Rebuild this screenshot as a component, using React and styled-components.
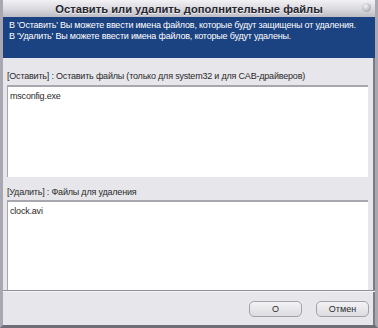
import React from 'react';
import styled, { createGlobalStyle } from 'styled-components';

const GlobalStyle = createGlobalStyle`
    html, body {
        margin: 0;
        padding: 0;
        background: #fff;
    }
    body {
        font-family: "Liberation Sans", Arial, sans-serif;
    }
`;

const Window = styled.div`
    width: 378px;
    height: 328px;
    box-sizing: border-box;
    display: flex;
    flex-direction: column;
    background: #e7e6eb;
    border-left: 3px solid #a9a8b2;
    border-right: 3px solid #a9a8b2;
    border-bottom: 3px solid #6e6d78;
    box-shadow: inset -2px 0 0 #7c7b86;
    overflow: hidden;
`;

const TitleBar = styled.div`
    height: 17px;
    flex: none;
    position: relative;
    display: flex;
    align-items: center;
    justify-content: center;
    background: linear-gradient(#f2f2f5 0%, #d8d8de 55%, #bdbcc5 100%);
    font-size: 11.2px;
    font-weight: bold;
    color: #26262e;
    text-shadow: 0 1px 0 rgba(255, 255, 255, .7);
`;

const CloseDot = styled.span`
    position: absolute;
    right: 4px;
    top: 3px;
    width: 9px;
    height: 9px;
    border-radius: 50%;
    background: radial-gradient(circle at 40% 35%, #f4f4f6 0%, #b9b9c1 60%, #8d8c96 100%);
`;

const InfoPanel = styled.div`
    height: 41px;
    flex: none;
    box-sizing: border-box;
    padding: 3px 6px 0;
    background: #1b4281;
    color: #fff;
    font-size: 9px;
    line-height: 11px;
    letter-spacing: -0.2px;
    white-space: nowrap;
`;

const Body = styled.div`
    flex: 1;
    display: flex;
    flex-direction: column;
    padding: 11px 7px 0 4px;
`;

const Label = styled.div`
    height: 14px;
    font-size: 9px;
    line-height: 14px;
    letter-spacing: -0.2px;
    color: #2a2a2a;
    white-space: nowrap;
    margin-bottom: ${ p => p.gap }px;
`;

const FileBox = styled.div`
    height: ${ p => p.h }px;
    box-sizing: border-box;
    background: #fff;
    border-top: 2px solid #a8a7b0;
    border-left: 1px solid #a8a7b0;
    padding: 4px 2px;
    font-size: 9px;
    letter-spacing: -0.2px;
    color: #2a2a2a;
    margin-bottom: ${ p => p.mb }px;
`;

const Footer = styled.div`
    margin-top: auto;
    height: 31px;
    flex: none;
    border-top: 1px solid #8f8e98;
    box-shadow: inset 0 1px 0 #f6f6f8;
    display: flex;
    justify-content: flex-end;
    align-items: flex-start;
    gap: 14px;
    padding: 10px 6px 0 0;
`;

const Button = styled.button`
    width: 53px;
    height: 16px;
    box-sizing: border-box;
    border: 1px solid #a3a2ac;
    border-radius: 5px;
    background: linear-gradient(#f3f3f5, #dcdce1);
    font-family: "Liberation Sans", Arial, sans-serif;
    font-size: 9px;
    color: #2a2a2a;
    padding: 0;
    line-height: 14px;
`;

export default function App() {
    return (
        <>
            <GlobalStyle />
            <Window>
                <TitleBar>
                    Оставить или удалить дополнительные файлы
                    <CloseDot />
                </TitleBar>
                <InfoPanel>
                    <div>В 'Оставить' Вы можете ввести имена файлов, которые будут защищены от удаления.</div>
                    <div>В 'Удалить' Вы можете ввести имена файлов, которые будут удалены.</div>
                </InfoPanel>
                <Body>
                    <Label gap={ 2 }>[Оставить] : Оставить файлы (только для system32 и для CAB-драйверов)</Label>
                    <FileBox h={ 92 } mb={ 8 }>msconfig.exe</FileBox>
                    <Label gap={ 1 }>[Удалить] : Файлы для удаления</Label>
                    <FileBox h={ 90 } mb={ 0 }>clock.avi</FileBox>
                </Body>
                <Footer>
                    <Button>О</Button>
                    <Button>Отмен</Button>
                </Footer>
            </Window>
        </>
    );
}
